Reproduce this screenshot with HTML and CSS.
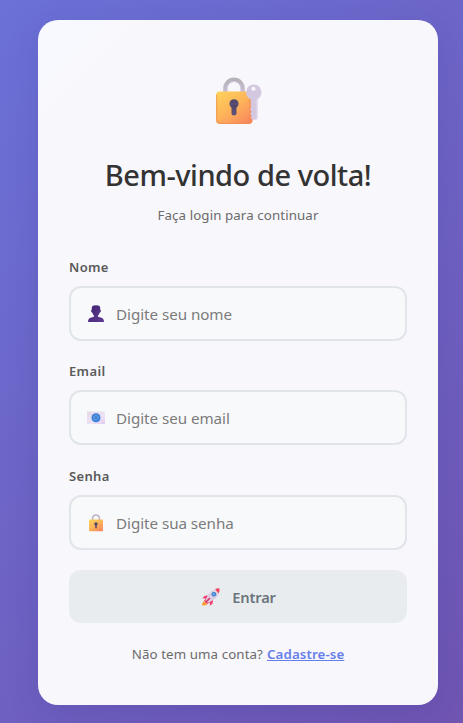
FILE: index.html
```html
<!DOCTYPE html>
<html lang="pt-BR">
<head>
<meta charset="utf-8">
<title>Login</title>
<link rel="stylesheet" href="styles.css">
</head>
<body>
<svg width="0" height="0" class="defs" aria-hidden="true">
  <defs>
    <linearGradient id="gold" x1="0" y1="0" x2=".8" y2="1"><stop offset="0" stop-color="#ffd45c"/><stop offset=".5" stop-color="#fdb659"/><stop offset="1" stop-color="#f98a5e"/></linearGradient>
    <linearGradient id="steel" x1="0" y1="0" x2="0" y2="1"><stop offset="0" stop-color="#b5b3b7"/><stop offset="1" stop-color="#c8bed2"/></linearGradient>
    <linearGradient id="hole" x1="0" y1="0" x2="0" y2="1"><stop offset="0" stop-color="#4d4468"/><stop offset="1" stop-color="#65557a"/></linearGradient>
    <linearGradient id="purple" x1="0" y1="0" x2="1" y2="1"><stop offset="0" stop-color="#412570"/><stop offset="1" stop-color="#5f3b91"/></linearGradient>
    <linearGradient id="paper" x1="0" y1="0" x2="1" y2="1"><stop offset="0" stop-color="#e5d9e7"/><stop offset=".6" stop-color="#eee5f7"/><stop offset="1" stop-color="#dfc9f0"/></linearGradient>
  </defs>
</svg>
<main class="card">
  <svg class="logo" viewBox="0 0 48 50">
    <path d="M10.300 17V12.300a8.700 8.700 0 0 1 17.400 0V17" fill="none" stroke="url(#steel)" stroke-width="4.200"/>
    <path d="M12 17v-4.500a7 7 0 0 1 14 0V17" fill="none" stroke="#d5c6e4" stroke-width="1"/>
    <rect x="1" y="15.500" width="36.500" height="32.500" rx="3.800" fill="url(#gold)"/>
    <path d="M1.700 19v24.500q0 3.500 3.500 3.900H33" fill="none" stroke="#ed8c55" stroke-width="1" opacity=".7"/>
    <path d="M34 18v23q0 5-2 7h2q3.500 0 3.500-4V18z" fill="#ef8854" opacity=".4"/>
    <circle cx="19" cy="27.800" r="4.600" fill="url(#hole)"/>
    <path d="M16.500 29h5v8.500q0 2-2.500 2t-2.500-2z" fill="url(#hole)"/>
    <path fill-rule="evenodd" d="M38.500 8.500a7.900 7.900 0 0 1 4.100 14.600V41.500q0 2.300-3 2.300-2.500 0-4-2l1-2-1.500-2 1.500-2-1.500-2 .8-2V23.600A7.900 7.900 0 0 1 38.500 8.500zM38.500 10.700a2.100 2.100 0 1 0 .01 0z" fill="#d4c8e1"/>
    <path d="M42 23v18.500q0 1.700-2 1.700" fill="none" stroke="#e5dced" stroke-width="1.200"/>
  </svg>
  <h1 class="title">Bem-vindo de volta!</h1>
  <p class="subtitle">Faça login para continuar</p>
  <form class="form">
    <div class="field">
      <label class="label">Nome</label>
      <div class="input">
        <svg class="icon" viewBox="0 0 18 18"><path d="M5.500 1Q6.500.2 9 .2t3.500.8q.9 1.200.8 3.800.9.200.5 1.700-.3 1-1 1.100-.5 2-1.900 3.100v.9q1.500.8 3.600 1.200 2.500.8 2.500 4.200H1q0-3.400 2.500-4.200 2.100-.4 3.600-1.200v-.9Q5.700 9.600 5.200 7.600q-.7-.1-1-1.100-.4-1.500.5-1.700-.1-2.600.8-3.800z" fill="url(#purple)"/></svg>
        <span class="placeholder">Digite seu nome</span>
      </div>
    </div>
    <div class="field">
      <label class="label">Email</label>
      <div class="input">
        <svg class="icon" viewBox="0 0 18 18"><rect x="0" y="2.500" width="18" height="12.500" rx=".6" fill="url(#paper)"/><path d="M.5 3l8.500 7 8.500-7M.5 14.500l6-5M17.500 14.500l-6-5" fill="none" stroke="#dccfe6" stroke-width=".5"/><circle cx="9" cy="8.700" r="4.500" fill="#317cda"/><path d="M10.700 8.700a1.700 1.700 0 1 1-3.400 0 1.700 1.700 0 0 1 3.400 0v.6q.9.900 1.100-.4A2.800 2.800 0 1 0 10.500 11" fill="none" stroke="#79a0d8" stroke-width=".75"/></svg>
        <span class="placeholder">Digite seu email</span>
      </div>
    </div>
    <div class="field">
      <label class="label">Senha</label>
      <div class="input pass">
        <svg class="icon" viewBox="0 0 18 18"><path d="M5.600 7V4.300a3.400 3.400 0 0 1 6.800 0V7" fill="none" stroke="#bbb0c5" stroke-width="1.500"/><rect x="2" y="5.500" width="14" height="11.700" rx=".8" fill="url(#gold)"/><circle cx="9" cy="9.900" r="1.700" fill="#4b4267"/><path d="M8.200 10h1.600v4.300H8.200z" fill="#5b4b69"/></svg>
        <span class="placeholder">Digite sua senha</span>
      </div>
    </div>
    <div class="button">
      <svg class="icon" viewBox="0 0 18 18">
        <path d="M0 17.500q0-3 2-4.500l3.500 3.500q-2 1-5.500 1z" fill="#ff9b28"/>
        <path d="M6 7.500Q2 7 .5 10.500q2-.5 3.500.3L2 12.500 5.500 16l2-1.700q1 1.700.2 3.500Q11.500 16 11 12z" fill="#f23a6e"/>
        <path d="M3.500 12.500Q6 4.500 12 1.500l4.600 4.700Q13.500 12 5.700 14.700z" fill="#d9cfe1"/>
        <path d="M13 1.200Q15.500 0 17.500.5q.5 2.500-1 5z" fill="#f1455f"/>
        <circle cx="11.900" cy="6.200" r="2.300" fill="#397cc7"/><circle cx="11.900" cy="6.200" r="1.200" fill="#62aaf1"/>
        <path d="M4 14 7.500 10.500" stroke="#dc3266" stroke-width="1.600" stroke-linecap="round"/>
      </svg>
      <span class="button-text">Entrar</span>
    </div>
  </form>
  <p class="footer"><span>Não tem uma conta?</span><a class="link">Cadastre-se</a></p>
</main>
</body>
</html>
```
FILE: styles.css
```css
* { box-sizing: border-box; }
body {
  margin: 0;
  height: 723px;
  padding: 20px 25px 18px 38px;
  overflow: hidden;
  font-family: "Noto Sans", "Open Sans", sans-serif;
  background: linear-gradient(135deg, #6b71d7 0%, #7055b2 100%);
}
.defs { position: absolute; }
.card {
  width: 400px;
  height: 685px;
  padding: 56px 31px 0;
  border-radius: 20px;
  display: flex;
  flex-direction: column;
  align-items: center;
  background: linear-gradient(135deg, #f7faff 0%, #f8f7fc 11%, #f8f7fc 100%);
  box-shadow: 0 8px 32px rgba(31, 38, 135, .15);
}
.logo { width: 48px; height: 50px; flex: none; margin-left: 2px; }
.title {
  margin: 29px 0 0;
  height: 40px;
  line-height: 40px;
  font-size: 29px;
  font-weight: 500;
  letter-spacing: -.48px;
  color: #333;
  white-space: nowrap;
}
.subtitle {
  margin: 10px 0 0;
  height: 20px;
  line-height: 20px;
  font-size: 13.3px;
  letter-spacing: .1px;
  color: #6b6b6b;
  white-space: nowrap;
}
.form { width: 100%; margin-top: 32px; }
.field { height: 104.4px; }
.label {
  display: block;
  width: max-content;
  height: 20px;
  line-height: 20px;
  font-size: 13px;
  font-weight: 600;
  letter-spacing: .35px;
  color: #5a5a5a;
}
.input {
  display: flex;
  align-items: center;
  height: 55px;
  margin-top: 9px;
  padding-left: 16px;
  gap: 11px;
  border: 2px solid #e1e5e9;
  border-radius: 12px;
  background: #f8f9fb;
}
.pass { padding-top: 1px; }
.icon { width: 18px; height: 18px; flex: none; }
.placeholder {
  font-size: 15.2px;
  line-height: 22px;
  color: #7b7b7b;
  letter-spacing: -.05px;
  white-space: nowrap;
}
.button {
  display: flex;
  align-items: center;
  justify-content: center;
  gap: 12px;
  height: 53px;
  padding-left: 2px;
  border-radius: 12px;
  background: #e8ecef;
  color: #6c757d;
}
.button-text { font-size: 14.7px; font-weight: 600; line-height: 22px; letter-spacing: -.15px; }
.footer {
  display: flex;
  gap: 4px;
  margin: 21px 0 0;
  height: 20px;
  line-height: 20px;
  font-size: 13.3px;
  letter-spacing: .1px;
  color: #6b6b6b;
  white-space: nowrap;
}
.link { color: #667eea; font-weight: 600; text-decoration: underline; }
```
